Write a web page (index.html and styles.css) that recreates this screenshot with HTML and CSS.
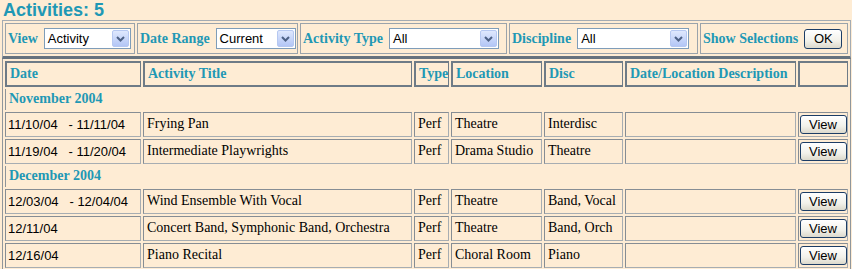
FILE: index.html
```html
<!DOCTYPE html>
<html>
<head>
<meta charset="utf-8">
<link rel="stylesheet" href="styles.css">
</head>
<body>
<div class="title">Activities: 5</div>
<table class="filters">
  <tr>
    <td class="f1"><div class="fc"><span class="lbl">View</span><span class="sel w87"><span class="sv">Activity</span><span class="arr"><svg width="15" height="15" viewBox="0 0 15 15"><path d="M4 6 L7.5 9.5 L11 6" fill="none" stroke="#4d6185" stroke-width="2"/></svg></span></span></div></td>
    <td class="f2"><div class="fc"><span class="lbl">Date Range</span><span class="sel w80"><span class="sv">Current</span><span class="arr"><svg width="15" height="15" viewBox="0 0 15 15"><path d="M4 6 L7.5 9.5 L11 6" fill="none" stroke="#4d6185" stroke-width="2"/></svg></span></span></div></td>
    <td class="f3"><div class="fc"><span class="lbl">Activity Type</span><span class="sel w110"><span class="sv">All</span><span class="arr"><svg width="15" height="15" viewBox="0 0 15 15"><path d="M4 6 L7.5 9.5 L11 6" fill="none" stroke="#4d6185" stroke-width="2"/></svg></span></span></div></td>
    <td class="f4"><div class="fc"><span class="lbl">Discipline</span><span class="sel w112"><span class="sv">All</span><span class="arr"><svg width="15" height="15" viewBox="0 0 15 15"><path d="M4 6 L7.5 9.5 L11 6" fill="none" stroke="#4d6185" stroke-width="2"/></svg></span></span></div></td>
    <td class="f5"><div class="fc"><span class="lbl">Show Selections</span><button class="btn ok">OK</button></div></td>
  </tr>
</table>
<table class="grid">
  <colgroup>
    <col class="c1"><col class="c2"><col class="c3"><col class="c4"><col class="c5"><col class="c6"><col class="c7">
  </colgroup>
  <tr class="hd">
    <th>Date</th><th>Activity Title</th><th>Type</th><th>Location</th><th>Disc</th><th>Date/Location Description</th><th></th>
  </tr>
  <tr class="mo"><td colspan="7">November 2004</td></tr>
  <tr class="row">
    <td class="dt">11/10/04&nbsp;&nbsp; - 11/11/04</td><td>Frying Pan</td><td>Perf</td><td>Theatre</td><td>Interdisc</td><td></td><td class="vc"><button class="btn view">View</button></td>
  </tr>
  <tr class="row">
    <td class="dt">11/19/04&nbsp;&nbsp; - 11/20/04</td><td>Intermediate Playwrights</td><td>Perf</td><td>Drama Studio</td><td>Theatre</td><td></td><td class="vc"><button class="btn view">View</button></td>
  </tr>
  <tr class="mo"><td colspan="7">December 2004</td></tr>
  <tr class="row">
    <td class="dt">12/03/04&nbsp;&nbsp; - 12/04/04</td><td>Wind Ensemble With Vocal</td><td>Perf</td><td>Theatre</td><td>Band, Vocal</td><td></td><td class="vc"><button class="btn view">View</button></td>
  </tr>
  <tr class="row">
    <td class="dt">12/11/04</td><td>Concert Band, Symphonic Band, Orchestra</td><td>Perf</td><td>Theatre</td><td>Band, Orch</td><td></td><td class="vc"><button class="btn view">View</button></td>
  </tr>
  <tr class="row">
    <td class="dt">12/16/04</td><td>Piano Recital</td><td>Perf</td><td>Choral Room</td><td>Piano</td><td></td><td class="vc"><button class="btn view">View</button></td>
  </tr>
</table>
</body>
</html>
```

FILE: styles.css
```css
html, body {
  margin: 0;
  padding: 0;
  background: #feecd4;
}
body {
  font-family: "Liberation Serif", "Times New Roman", serif;
  font-size: 14px;
  color: #000;
  overflow: hidden;
}
.title {
  font-family: "Liberation Sans", Arial, sans-serif;
  font-weight: bold;
  font-size: 18px;
  color: #1f98b5;
  height: 19px;
  line-height: 19px;
  padding: 1px 0 0 3px;
}
.filters {
  margin-left: 2px;
  width: 849px;
  border-collapse: separate;
  border-spacing: 2px;
  border: 1px solid #a3abb3;
  border-bottom: 3px solid #66727e;
}
.filters td {
  box-sizing: border-box;
  height: 31px;
  padding: 0 0 0 2px;
  border: 1px solid #9aa3ab;
  vertical-align: middle;
}
.f1 { width: 130px; }
.f2 { width: 161px; }
.f3 { width: 207px; }
.f4 { width: 189px; }
.f5 { width: 148px; }
.fc {
  display: flex;
  align-items: center;
  gap: 6px;
}
.lbl {
  font-weight: bold;
  color: #1f98b5;
  white-space: nowrap;
}
.sel {
  box-sizing: border-box;
  height: 21px;
  border: 1px solid #7f9db9;
  background: #fff;
  display: flex;
  align-items: center;
  justify-content: space-between;
  font-family: "Liberation Sans", Arial, sans-serif;
  font-size: 13px;
  padding-left: 3px;
}
.w87 { width: 87px; }
.w80 { width: 80px; }
.w110 { width: 110px; }
.w112 { width: 112px; }
.arr {
  box-sizing: border-box;
  width: 17px;
  height: 17px;
  margin-right: 1px;
  border: 1px solid #b6c8f1;
  border-radius: 2px;
  background: linear-gradient(#dfe8fd, #b3c6f6);
  display: flex;
  align-items: center;
  justify-content: center;
}
.btn {
  font-family: "Liberation Sans", Arial, sans-serif;
  font-size: 13px;
  color: #000;
  border: 1px solid #1c3d66;
  border-radius: 3px;
  background: linear-gradient(#ffffff, #f2f1ea 60%, #dcd9cc);
  padding: 0;
  margin: 0;
}
.ok {
  width: 38px;
  height: 20px;
}
.grid {
  margin-left: 2px;
  width: 849px;
  table-layout: fixed;
  border-collapse: separate;
  border-spacing: 2px;
  border: 1px solid #8f969c;
  border-top: 0;
}
.c1 { width: 136px; }
.c2 { width: 269px; }
.c3 { width: 35px; }
.c4 { width: 91px; }
.c5 { width: 79px; }
.c6 { width: 171px; }
.c7 { width: 50px; }
.grid th, .grid td {
  box-sizing: border-box;
  padding: 0 0 0 3px;
  text-align: left;
  vertical-align: middle;
  white-space: nowrap;
  overflow: hidden;
}
.hd th {
  height: 26px;
  border: 2px solid #6e7b87;
  border-width: 2px 1px 2px 2px;
  color: #1f98b5;
  font-weight: bold;
}
.mo td {
  height: 21px;
  padding-bottom: 2px;
  border-left: 1px solid #8d949a;
  color: #1f98b5;
  font-weight: bold;
}
.row td {
  height: 25px;
  padding-bottom: 1px;
  border: 1px solid #868d94;
  border-right-color: #a7adb2;
  border-bottom-color: #a7adb2;
}
.row td.dt {
  font-family: "Liberation Sans", Arial, sans-serif;
  font-size: 13px;
  padding-left: 2px;
}
.row td.vc {
  padding: 0;
  text-align: center;
}
.view {
  width: 47px;
  height: 19px;
  display: block;
  margin: 0 auto;
}
```
